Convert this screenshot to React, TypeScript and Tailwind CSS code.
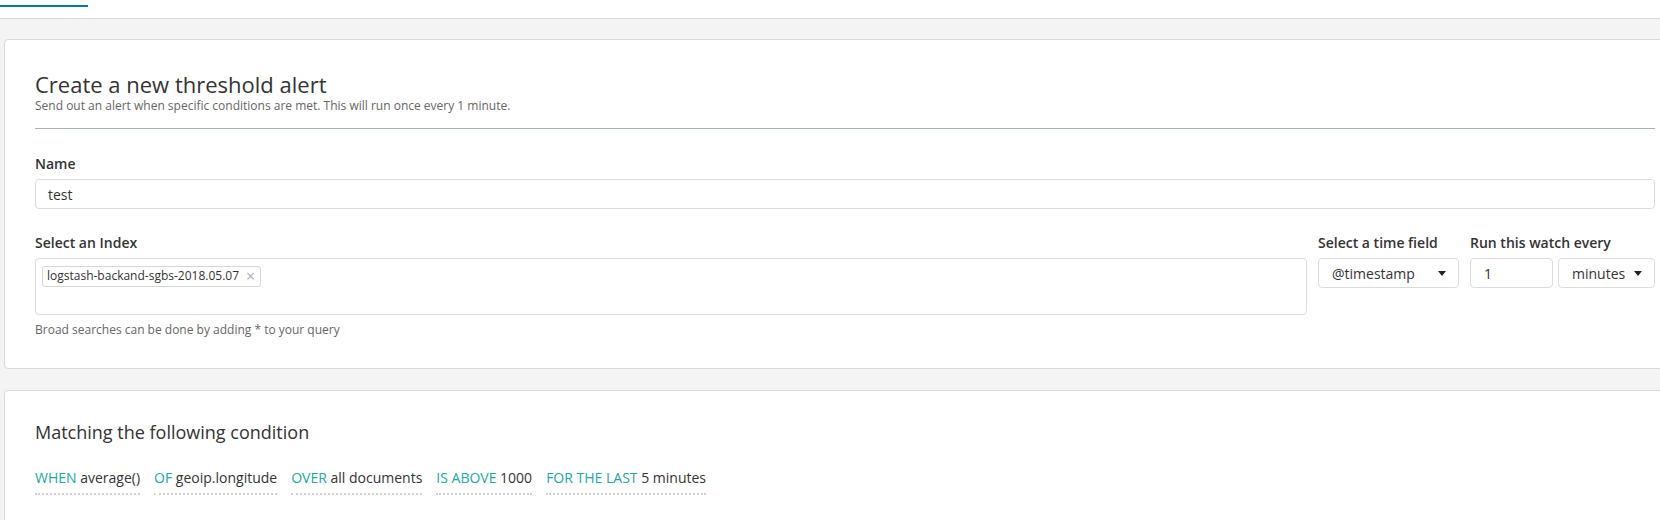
import React from 'react'

const Caret = () => (
  <span className="inline-block w-0 h-0 border-l-[4px] border-r-[4px] border-t-[5px] border-l-transparent border-r-transparent border-t-[#222]" />
)

const conditions = [
  { key: 'WHEN', value: 'average()' },
  { key: 'OF', value: 'geoip.longitude' },
  { key: 'OVER', value: 'all documents' },
  { key: 'IS ABOVE', value: '1000' },
  { key: 'FOR THE LAST', value: '5 minutes' },
]

export default function App() {
  return (
    <div className="w-[1660px] h-[520px] overflow-hidden bg-[#f4f4f4] font-['Open_Sans',sans-serif] text-[#333]">
      {/* top tab strip */}
      <div className="h-[19px] pt-[5px] bg-white border-b border-[#d6d6d6]">
        <div className="h-[2px] w-[88px] bg-[#0079a5]" />
      </div>

      <div className="px-[4px] pt-[20px]">
        {/* Create alert card */}
        <div className="w-[1682px] bg-white border border-[#d9d9d9] rounded-[4px] px-[30px] pt-[31px] pb-[31px]">
          <h1 className="text-[22px] leading-[26px] font-normal text-[#333]">Create a new threshold alert</h1>
          <p className="mt-[1px] text-[12px] leading-[15px] text-[#666]">
            Send out an alert when specific conditions are met. This will run once every 1 minute.
          </p>
          <div className="mt-[15px] h-px bg-[#aab2bd]" />

          <label className="block mt-[25px] text-[14px] leading-[20px] font-semibold text-[#333]">Name</label>
          <div className="mt-[5px] h-[30px] border border-[#dcdcdc] rounded-[4px] flex items-center px-[12px] text-[14px] text-[#333]">
            test
          </div>

          <div className="mt-[24px] flex gap-[11px]">
            <div className="flex-1">
              <label className="block text-[14px] leading-[20px] font-semibold">Select an Index</label>
              <div className="mt-[5px] h-[57px] border border-[#dcdcdc] rounded-[4px] pt-[3px] pl-[6px]">
                <span className="inline-flex items-center h-[21px] border border-[#d6d6d6] rounded-[3px] pl-[4px] pr-[5px] text-[12px] text-[#333]">
                  logstash-backand-sgbs-2018.05.07
                  <span className="ml-[7px] text-[#b0b0b0] text-[16px] leading-none">×</span>
                </span>
              </div>
              <p className="mt-[7px] text-[12px] leading-[15px] text-[#666]">Broad searches can be done by adding * to your query</p>
            </div>

            <div className="w-[141px]">
              <label className="block text-[14px] leading-[20px] font-semibold whitespace-nowrap">Select a time field</label>
              <div className="mt-[5px] h-[30px] border border-[#dcdcdc] rounded-[4px] flex items-center justify-between pl-[13px] pr-[12px] text-[14px]">
                <span>@timestamp</span>
                <Caret />
              </div>
            </div>

            <div className="w-[185px]">
              <label className="block text-[14px] leading-[20px] font-semibold whitespace-nowrap">Run this watch every</label>
              <div className="mt-[5px] flex gap-[5px]">
                <div className="w-[83px] h-[30px] border border-[#dcdcdc] rounded-[4px] flex items-center px-[13px] text-[14px]">1</div>
                <div className="w-[97px] h-[30px] border border-[#dcdcdc] rounded-[4px] flex items-center justify-between pl-[13px] pr-[12px] text-[14px]">
                  <span>minutes</span>
                  <Caret />
                </div>
              </div>
            </div>
          </div>
        </div>

        {/* Condition card */}
        <div className="mt-[21px] w-[1682px] h-[200px] bg-white border border-[#d9d9d9] rounded-[4px] px-[30px] pt-[30px]">
          <h2 className="text-[18px] leading-[22px] font-normal text-[#333]">Matching the following condition</h2>
          <div className="mt-[25px] flex gap-[14px] text-[14px] leading-[20px]">
            {conditions.map((c) => (
              <div key={c.key} className="pb-[5px] border-b-2 border-dotted border-[#cfcfcf] whitespace-nowrap">
                <span className="text-[#20a9a2]">{c.key}</span> <span className="text-[#333]">{c.value}</span>
              </div>
            ))}
          </div>
        </div>
      </div>
    </div>
  )
}
